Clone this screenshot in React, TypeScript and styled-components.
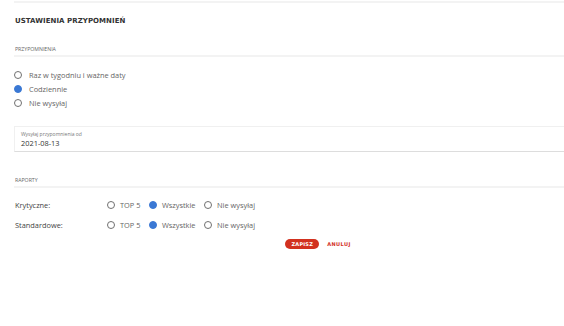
import styled, { createGlobalStyle } from 'styled-components';

const Global = createGlobalStyle`
  html, body {
    margin: 0;
    padding: 0;
    background: #fff;
  }
  body {
    font-family: "Open Sans", "Liberation Sans", sans-serif;
    color: #555;
  }
`

type Opt = { label: string; checked?: boolean; wide?: boolean }

function Radio({ label, checked, wide }: Opt) {
  return (<Choice wide={wide}>
    <Dot checked={checked} />
    <ChoiceText>{label}</ChoiceText>
  </Choice>)
}

export default function App() {
  return (<>
    <Global />
    <Page>
      <TopRule />
      <Title>Ustawienia przypomnień</Title>
      <Section top={20}>Przypomnienia</Section>
      <Stack>
        <Radio wide label="Raz w tygodniu i ważne daty" />
        <Radio wide label="Codziennie" checked />
        <Radio wide label="Nie wysyłaj" />
      </Stack>
      <Field>
        <FieldLabel>Wysyłaj przypomnienia od</FieldLabel>
        <FieldValue>2021-08-13</FieldValue>
      </Field>
      <Section top={25}>Raporty</Section>
      <Table>
        <RowLabel>Krytyczne:</RowLabel>
        <Options>
          <Radio label="TOP 5" />
          <Radio label="Wszystkie" checked />
          <Radio label="Nie wysyłaj" />
        </Options>
        <RowLabel>Standardowe:</RowLabel>
        <Options>
          <Radio label="TOP 5" />
          <Radio label="Wszystkie" checked />
          <Radio label="Nie wysyłaj" />
        </Options>
      </Table>
      <Actions>
        <Save>Zapisz</Save>
        <Cancel>Anuluj</Cancel>
      </Actions>
    </Page>
  </>)
}

const Page = styled.div`
  padding: 1px 0 0 14px;
  display: flex;
  flex-direction: column;
`

const TopRule = styled.div`
  height: 2px;
  background: #f3f3f3;
`

const Title = styled.h1`
  margin: 13px 0 0 1px;
  font-family: "DejaVu Sans", sans-serif;
  font-size: 7px;
  font-weight: 700;
  text-transform: uppercase;
  letter-spacing: 0.05px;
  color: #333;
  line-height: 10px;
`

const Section = styled.div<{ top: number }>`
  margin-top: ${p => p.top}px;
  padding: 0 0 2px 1px;
  border-bottom: 2px solid #f3f3f3;
  font-size: 5.2px;
  text-transform: uppercase;
  color: #666;
  line-height: 7px;
`

const Stack = styled.div`
  margin-top: 13px;
  display: flex;
  flex-direction: column;
  gap: 4px;
`

const Choice = styled.label<{ wide?: boolean }>`
  display: flex;
  align-items: center;
  gap: ${p => p.wide ? 7 : 5}px;
`

const Dot = styled.span<{ checked?: boolean }>`
  box-sizing: border-box;
  width: 8px;
  height: 8px;
  border-radius: 50%;
  border: 1px solid ${p => p.checked ? '#3a78d4' : '#707070'};
  background: ${p => p.checked ? '#3a78d4' : '#fff'};
`

const ChoiceText = styled.span`
  font-size: 7.4px;
  line-height: 10px;
  color: #666;
`

const Field = styled.div`
  margin-top: 18px;
  padding: 4px 6px 2px;
  border: 1px solid #f0f0f0;
  border-right: none;
  border-bottom: 1px solid #ddd;
  display: flex;
  flex-direction: column;
`

const FieldLabel = styled.span`
  font-size: 5px;
  line-height: 7px;
  color: #777;
`

const FieldValue = styled.span`
  font-size: 7.4px;
  line-height: 11px;
  color: #333;
`

const Table = styled.div`
  margin-top: 12px;
  display: grid;
  grid-template-columns: 92px auto;
  row-gap: 10px;
  padding-left: 1px;
  align-items: center;
`

const RowLabel = styled.span`
  font-size: 7.4px;
  line-height: 10px;
  color: #444;
`

const Options = styled.div`
  display: flex;
  gap: 8.5px;
`

const Actions = styled.div`
  margin-top: 9px;
  padding-left: 58px;
  display: flex;
  justify-content: center;
  align-items: center;
  gap: 8px;
`

const Save = styled.button`
  border: none;
  border-radius: 6px;
  background: #d2311f;
  color: #fff;
  font-family: "DejaVu Sans", sans-serif;
  font-size: 5px;
  font-weight: 700;
  letter-spacing: 0.2px;
  text-transform: uppercase;
  height: 10px;
  width: 34px;
  padding: 0;
`

const Cancel = styled.button`
  border: none;
  background: none;
  color: #d2311f;
  font-family: "DejaVu Sans", sans-serif;
  font-size: 5px;
  font-weight: 700;
  letter-spacing: 0.4px;
  text-transform: uppercase;
  padding: 0;
`
